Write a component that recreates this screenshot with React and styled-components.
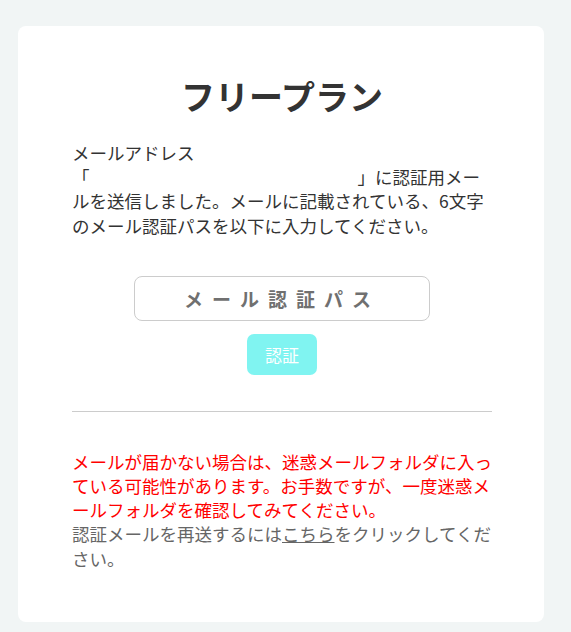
import React from 'react';
import styled, { createGlobalStyle } from 'styled-components';

const GlobalStyle = createGlobalStyle`
    html, body {
        margin: 0;
        padding: 0;
        background: #f1f5f5;
    }
    body {
        font-family: "Noto Sans CJK JP", "Noto Sans", sans-serif;
        color: #333;
    }
`

const Page = styled.div`
    padding: 26px 0 0 18px;
    height: 632px;
    box-sizing: border-box;
    overflow: hidden;
`

const Card = styled.div`
    width: 526px;
    height: 596px;
    box-sizing: border-box;
    background: #fff;
    border-radius: 8px;
    padding: 50px 52px 0 54px;
`

const Title = styled.h1`
    margin: 0 0 25px;
    font-size: 34px;
    font-weight: 700;
    line-height: 40px;
    text-align: center;
    color: #333;
`

const Text = styled.p`
    margin: 0;
    font-size: 17.5px;
    line-height: 24.2px;
    color: ${props => props.color || '#333'};
`

const EmailBlank = styled.span`
    display: inline-block;
    width: 268px;
`

const Form = styled.form`
    display: flex;
    flex-direction: column;
    align-items: center;
    gap: 13px;
    margin: 38px 0 36px;
`

const PassInput = styled.input`
    width: 296px;
    height: 45px;
    box-sizing: border-box;
    border: 1px solid #ccc;
    border-radius: 8px;
    font-family: inherit;
    font-size: 19px;
    font-weight: 700;
    letter-spacing: 9px;
    text-align: center;
    outline: none;

    &::placeholder {
        color: #707070;
    }
`

const SubmitButton = styled.button`
    width: 70px;
    height: 41px;
    border: none;
    border-radius: 7px;
    background: #80f4f1;
    color: #fff;
    font-family: inherit;
    font-size: 17px;
    cursor: pointer;
`

const Divider = styled.hr`
    margin: 0 0 38px;
    border: none;
    border-top: 1px solid #ccc;
`

const ResendLink = styled.a`
    color: inherit;
    text-decoration: underline;
`

const App = () => {
    return (
        <>
        <GlobalStyle />
        <Page>
            <Card>
                <Title>フリープラン</Title>

                <Text>
                    メールアドレス<br />「<EmailBlank />」に認証用メールを送信しました。メールに記載されている、6文字のメール認証パスを以下に入力してください。
                </Text>

                <Form onSubmit={e => e.preventDefault()}>
                    <PassInput type="text" placeholder="メール認証パス" />
                    <SubmitButton type="submit">認証</SubmitButton>
                </Form>

                <Divider />

                <Text color="#ff0000">
                    メールが届かない場合は、迷惑メールフォルダに入っている可能性があります。お手数ですが、一度迷惑メールフォルダを確認してみてください。
                </Text>
                <Text color="#666">
                    認証メールを再送するには<ResendLink href="#">こちら</ResendLink>をクリックしてください。
                </Text>
            </Card>
        </Page>
        </>
    )
};

export default App;
